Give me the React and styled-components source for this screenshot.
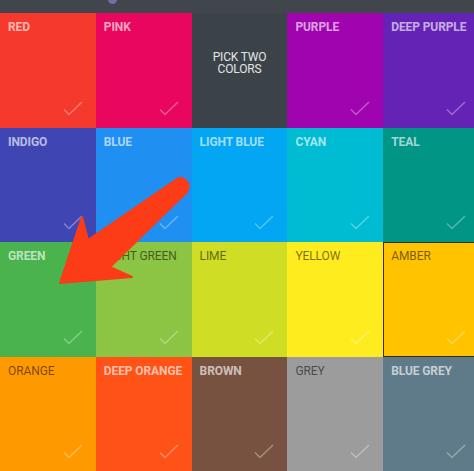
import React from 'react'
import styled, { createGlobalStyle } from 'styled-components'

const GlobalStyle = createGlobalStyle`
  html, body {
    margin: 0;
    padding: 0;
    background: #3f4549;
    overflow: hidden;
  }
  body {
    font-family: Roboto, "Liberation Sans", Arial, sans-serif;
  }
`

const colors = [
  { name: 'RED', bg: '#f5392c' },
  { name: 'PINK', bg: '#e8065e' },
  { name: 'PICK' },
  { name: 'PURPLE', bg: '#9f04ae' },
  { name: 'DEEP PURPLE', bg: '#6523b6' },
  { name: 'INDIGO', bg: '#3f46b3' },
  { name: 'BLUE', bg: '#1f8ff2' },
  { name: 'LIGHT BLUE', bg: '#02a6f3' },
  { name: 'CYAN', bg: '#00bcd3' },
  { name: 'TEAL', bg: '#009585' },
  { name: 'GREEN', bg: '#4ab34e' },
  { name: 'LIGHT GREEN', bg: '#8cc444', dark: true },
  { name: 'LIME', bg: '#cfdd24', dark: true },
  { name: 'YELLOW', bg: '#ffec1e', dark: true },
  { name: 'AMBER', bg: '#ffc300', dark: true, selected: true },
  { name: 'ORANGE', bg: '#ff9900', dark: true },
  { name: 'DEEP ORANGE', bg: '#ff5216' },
  { name: 'BROWN', bg: '#785240' },
  { name: 'GREY', bg: '#9c9c9c', dark: true },
  { name: 'BLUE GREY', bg: '#5f7a89' },
]

const Page = styled.div`
  position: relative;
  width: 474px;
  height: 471px;
  overflow: hidden;
  background: #3f4549;
`

const TopBar = styled.div`
  position: relative;
  height: 13px;
  background: #40464b;
`

const Dot = styled.span`
  position: absolute;
  left: 108px;
  top: -5px;
  width: 9px;
  height: 9px;
  border-radius: 50%;
  background: #8a7fd0;
  opacity: 0.7;
`

const Grid = styled.div`
  display: grid;
  grid-template-columns: repeat(5, 95.8px);
  grid-auto-rows: 114.6px;
  width: 479px;
`

const Cell = styled.div`
  display: flex;
  flex-direction: column;
  background: ${p => p.$bg};
  box-shadow: ${p => (p.$selected ? 'inset 0 0 0 1px rgba(20, 20, 20, 0.85)' : 'none')};
  padding: 7px 0 0 8px;
  box-sizing: border-box;
`

const Label = styled.div`
  font-size: 12px;
  line-height: 14px;
  font-weight: ${p => (p.$dark ? 400 : 700)};
  color: ${p => (p.$dark ? 'rgba(0, 0, 0, 0.55)' : 'rgba(255, 255, 255, 0.65)')};
  white-space: nowrap;
  letter-spacing: -0.1px;
`

const Check = styled.svg`
  margin-top: auto;
  align-self: flex-end;
  margin-right: 13px;
  margin-bottom: 12px;
`

const PickCell = styled.div`
  display: flex;
  align-items: center;
  justify-content: center;
  padding-bottom: 15px;
  box-sizing: border-box;
  background: #3c4348;
  color: #e2e4e6;
  font-size: 12px;
  line-height: 12px;
  text-align: center;
  letter-spacing: -0.2px;
`

const Arrow = styled.svg`
  position: absolute;
  left: 0;
  top: 0;
  pointer-events: none;
`

const CheckMark = () => (
  <Check width="20" height="15" viewBox="0 0 20 15">
    <path
      d="M1 8.5 L6 13.5 L19 1"
      fill="none"
      stroke="rgba(255,255,255,0.33)"
      strokeWidth="1.6"
    />
  </Check>
)

export default function App() {
  return (
    <Page>
      <GlobalStyle />
      <TopBar>
        <Dot />
      </TopBar>
      <Grid>
        {colors.map(c =>
          c.name === 'PICK' ? (
            <PickCell key={c.name}>
              PICK TWO
              <br />
              COLORS
            </PickCell>
          ) : (
            <Cell key={c.name} $bg={c.bg} $selected={c.selected}>
              <Label $dark={c.dark}>{c.name}</Label>
              <CheckMark />
            </Cell>
          )
        )}
      </Grid>
      <Arrow width="474" height="471" viewBox="0 0 474 471">
        <path
          d="M177 179 L88 240 L82 217 L60 283 L132 277 L110 267 L187 192 Q191 183 184 179 Q181 177 177 179 Z"
          fill="#fb3c16"
          stroke="#fb3c16"
          strokeWidth="2"
          strokeLinejoin="round"
        />
      </Arrow>
    </Page>
  )
}
